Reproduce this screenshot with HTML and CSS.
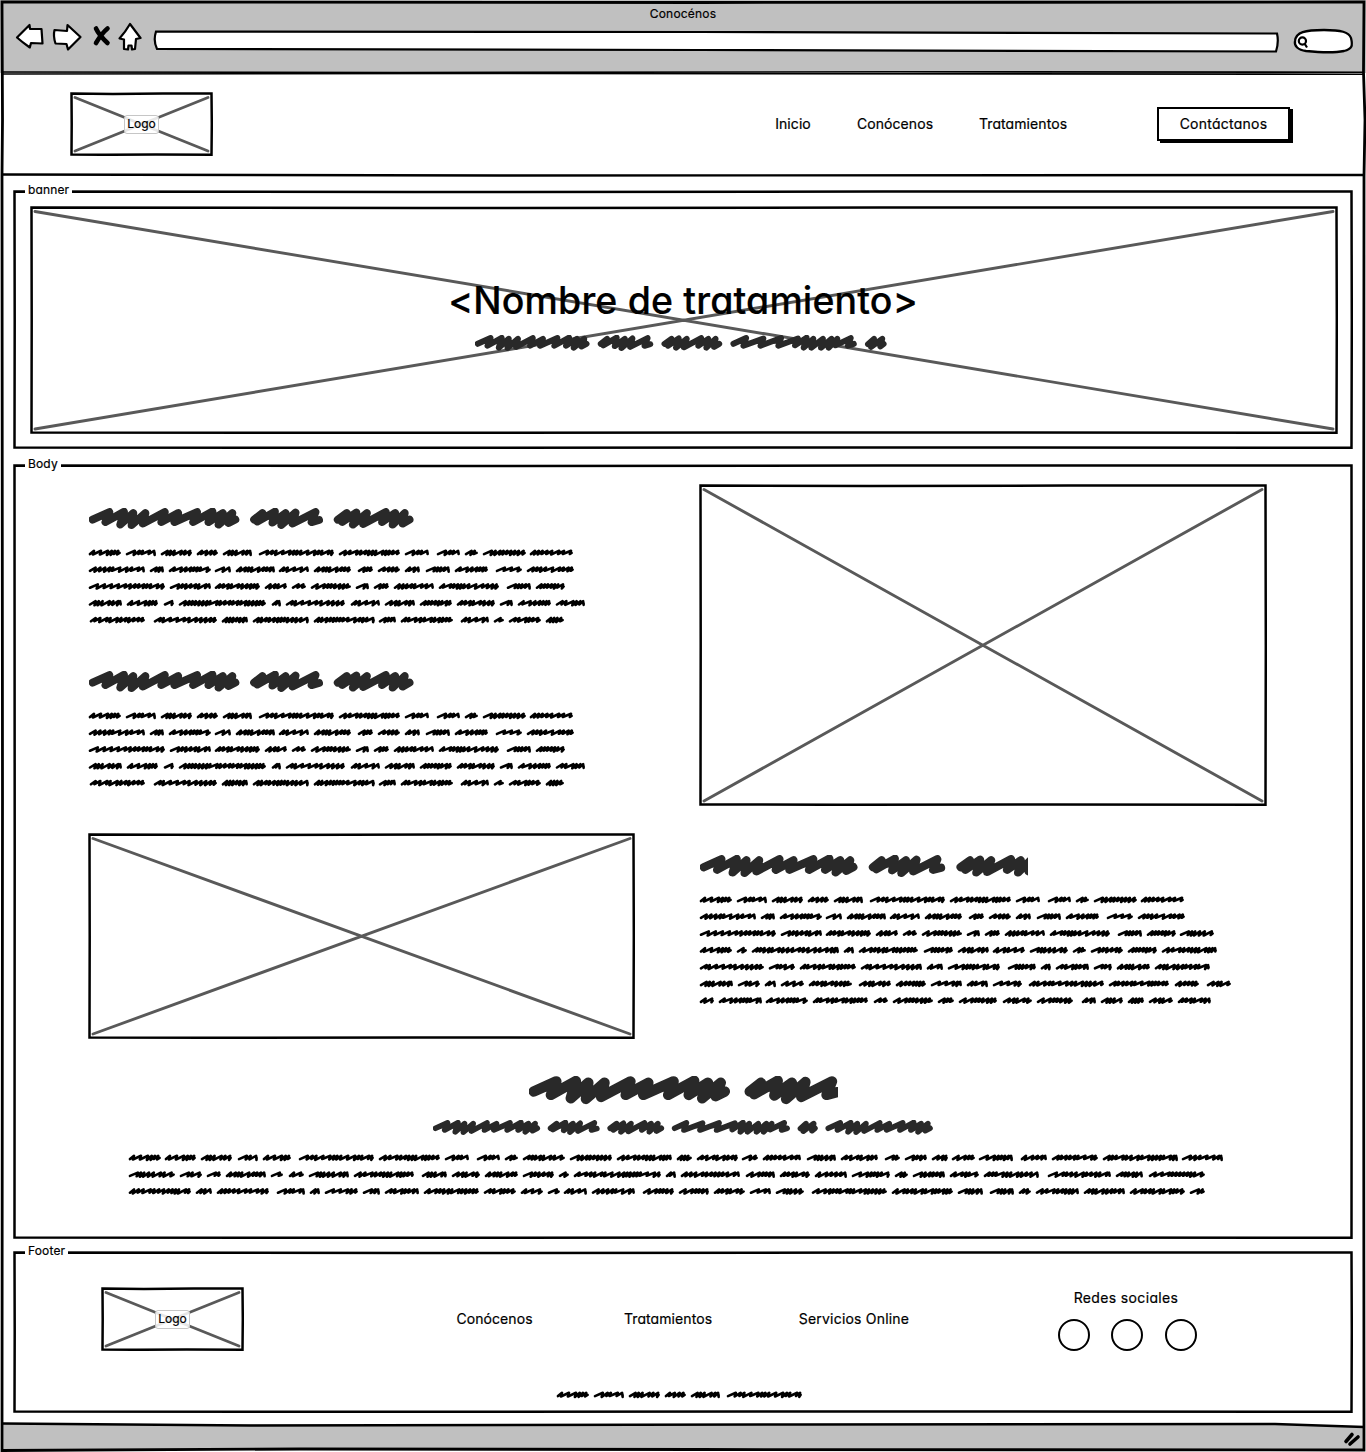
FILE: index.html
```html
<!DOCTYPE html>
<html lang="es">
<head>
<meta charset="utf-8">
<title>Conocénos</title>
<link rel="stylesheet" href="styles.css">
</head>
<body>
<div class="window">
  <header class="toolbar">
    <div class="window-title">Conocénos</div>
    <div class="controls">
      <svg class="nav-icons" width="128" height="32" viewBox="14 21 128 32">
        <g fill="#fff" stroke="#000" stroke-width="2.2" stroke-linejoin="round">
          <path d="M17 37.500 29.500 25 30 28.800 41.500 29 42.500 43.500 31 43 29.800 47.500Q22 42 17 37.500Z"/>
          <path d="M54.500 30 67 31 67.500 25 80.500 37 68 49.500 66.500 44 55.500 43.500Q53 36 54.500 30Z"/>
          <path d="M130 24 140.500 38 136 39 135 49 132 49.500 131.500 45.500 128.500 45.500 128 49.500 124 49 124 39.500 119.500 38.500Q126 31 130 24Z"/>
        </g>
        <path d="M96 28.500Q99 35 107.500 43M107.500 28.500Q102 33 96 43" fill="none" stroke="#000" stroke-width="4.600" stroke-linecap="round"/>
      </svg>
      <svg class="address" width="1126" height="24" viewBox="153 29 1126 24">
        <path d="M156 31.500 700 32 1277 33.500Q1279 42 1276 51.500L700 50 157 49Q153 41 156 31.500Z" fill="#fff" stroke="#000" stroke-width="2.200"/>
      </svg>
      <svg class="search" width="62" height="27" viewBox="1292 28 62 27">
        <path d="M1295 41C1296 32 1305 30 1324 30C1341 30 1349 32 1351 38C1353 46 1352 49 1344 51C1334 53 1316 52 1306 51C1298 50 1294 46 1295 41Z" fill="#fff" stroke="#000" stroke-width="2.300"/>
        <path d="M1306 41A3.600 3.600 0 1 1 1298.800 41A3.600 3.600 0 1 1 1306 41M1304.500 43.500 1307 47.500" fill="none" stroke="#000" stroke-width="2.200"/>
      </svg>
    </div>
  </header>

  <section class="site-header">
    <div class="sketch-image logo" data-w="143" data-h="64"><span>Logo</span></div>
    <nav>
      <a class="w-inicio">Inicio</a>
      <a class="w-con">Conócenos</a>
      <a class="w-trat">Tratamientos</a>
    </nav>
    <button class="contact">Contáctanos</button>
  </section>

  <main>
    <section class="panel banner" data-w="1340" data-h="259">
      <span class="legend">banner</span>
      <div class="sketch-image hero" data-w="1308" data-h="228">
        <div class="hero-copy">
          <h1>&lt;Nombre de tratamiento&gt;</h1>
          <div class="heading" data-words="ABCDE" data-scale=".192"></div>
        </div>
      </div>
    </section>

    <section class="panel content" data-w="1340" data-h="775">
      <span class="legend">Body</span>
      <div class="columns">
        <div class="column left">
          <div class="heading" data-words="ABC" data-scale=".252"></div>
          <div class="paragraph" data-text="short"></div>
          <div class="heading second" data-words="ABC" data-scale=".252"></div>
          <div class="paragraph" data-text="short"></div>
          <div class="sketch-image" data-w="547" data-h="206"></div>
        </div>
        <div class="column right">
          <div class="sketch-image" data-w="568" data-h="322"></div>
          <div class="heading" data-words="ABC" data-scale=".264" data-clip="328"></div>
          <div class="paragraph" data-text="long"></div>
        </div>
      </div>
      <div class="closing">
        <div class="heading" data-words="AB" data-scale=".337" data-clip="309"></div>
        <div class="heading sub" data-words="ABCDEA" data-scale=".1795"></div>
        <div class="paragraph wide" data-text="wide"></div>
      </div>
    </section>

    <section class="panel footer" data-w="1340" data-h="162">
      <span class="legend">Footer</span>
      <div class="footer-row">
        <div class="sketch-image logo" data-w="143" data-h="64"><span>Logo</span></div>
        <nav>
          <a class="w-con">Conócenos</a>
          <a class="w-trat">Tratamientos</a>
          <a class="w-serv">Servicios Online</a>
        </nav>
        <div class="social">
          <div class="social-title">Redes sociales</div>
          <div class="circles"><i></i><i></i><i></i></div>
        </div>
      </div>
      <div class="paragraph copyright" data-text="copyright"></div>
    </section>
  </main>

  <footer class="statusbar">
    <svg width="1366" height="31" viewBox="0 1421 1366 31">
      <path d="M2 1424 460 1425 800 1424.500 1275 1424 1364 1427V1450H2Z" fill="#c0c0c0"/>
      <path d="M2 1423.500 250 1425.500 800 1424.500 1275 1424 1364 1427" fill="none" stroke="#000" stroke-width="2.600"/>
      <path d="M1346 1441.500 1352 1434.500M1350 1444 1358 1437" stroke="#000" stroke-width="3.600" stroke-linecap="round"/>
    </svg>
  </footer>
  <svg class="window-frame" width="1366" height="1452" viewBox="0 0 1366 1452">
    <g fill="none" stroke="#000">
      <path d="M2 2 700 2.500 1364 2 1363.500 72 1365 120 1364 176 1363.500 800 1364 1450 700 1449.500 300 1449 2 1450.500 2.500 800 2 176 2.500 120Z" stroke-width="2.800"/>
      <path d="M2 72 400 72.500 900 71.800 1364 72.200M2 74 500 73.500 1364 74.200" stroke-width="1.600"/>
      <path d="M2 174.500 500 175.500 1364 175" stroke-width="2.400"/>
    </g>
  </svg>
</div>
<script src="sketch.js"></script>
</body>
</html>
```
FILE: styles.css
```css
* { box-sizing: border-box; }
body { margin: 0; background: #fff; color: #000; font-family: Inter, "Noto Sans", sans-serif; font-feature-settings: "cv11" 1; font-size: 14px; letter-spacing: .08px; -webkit-text-stroke: .2px #000; }
svg { display: block; }
.window { position: relative; width: 1366px; height: 1452px; overflow: hidden; display: flex; flex-direction: column; }
.window-frame { position: absolute; inset: 0; pointer-events: none; }
.toolbar { height: 73px; background: #c0c0c0; padding-top: 6px; }
.window-title { height: 15px; line-height: 15px; font-size: 12px; letter-spacing: .2px; text-align: center; }
.controls { display: flex; align-items: flex-start; padding-left: 14px; }
.address { margin: 8px 13px 0 11px; }
.search { margin-top: 7px; }

.site-header { height: 103px; padding: 19px 73px 0 70px; display: flex; align-items: flex-start; }
.sketch-image { position: relative; flex: none; }
.sketch-image > svg { position: absolute; inset: 0; }
.logo { display: grid; place-items: center; width: 143px; height: 64px; }
.logo span { position: relative; width: 35px; height: 19px; line-height: 16px; border: 1px solid #c6c6c6; border-radius: 3px; background: rgba(255,255,255,.85); text-align: center; font-size: 12px; letter-spacing: 0; }
nav { display: flex; }
nav a { white-space: nowrap; line-height: 20px; text-align: center; }
.w-inicio { width: 36px; }
.w-con { width: 77px; }
.w-trat { width: 88px; }
.w-serv { width: 112px; letter-spacing: .2px; }
.site-header nav { margin: 22px 91px 0 562px; gap: 45.5px; }
.contact { width: 133px; height: 34px; margin: 15px 0 0 -1px; border: 2px solid #000; background: #fff; box-shadow: 3px 2px 0 #000; padding: 0 0 2px; font: inherit; letter-spacing: .25px; font-feature-settings: inherit; color: #000; }

main { padding: 14px 13px 0; }
.panel { position: relative; width: 1340px; }
.panel > svg { position: absolute; inset: 0; pointer-events: none; }
.legend { position: absolute; left: 12px; top: -8px; padding: 0 3px; background: #fff; font-size: 12px; line-height: 16px; letter-spacing: .15px; z-index: 1; }
.banner { height: 260px; padding: 16px 0 0 17px; }
.hero { width: 1308px; height: 228px; }
.hero-copy { position: relative; display: flex; flex-direction: column; align-items: center; padding-top: 69px; }
h1 { margin: 0 0 8px -2px; font-size: 37.500px; line-height: 52px; font-weight: 500; letter-spacing: .15px; white-space: nowrap; }
.hero-copy .heading { margin-right: 6px; }

.content { margin-top: 14px; height: 775px; padding: 20px 0 0 75px; }
.columns { display: grid; grid-template-columns: 611px 568px; height: 592px; }
.left { padding-top: 23px; }
.heading svg { margin-left: 1px; }
.left .heading { height: 40px; padding-top: 1px; }
.left .paragraph { height: 123px; }
.left .sketch-image { width: 547px; height: 206px; }
.right .sketch-image { width: 568px; height: 323px; }
.right .heading { margin-top: 47px; height: 40px; padding-top: 1px; }
.closing { padding-left: 40px; }
.closing > .heading { margin-left: 400px; height: 44px; }
.closing > .sub { margin-left: 304px; height: 32px; }

.footer { margin-top: 12px; height: 162px; padding-top: 36px; }
.footer-row { display: flex; padding-left: 88px; height: 102px; }
.footer nav { margin: 22px 0 0 212px; }
.footer .w-trat { margin-left: 91px; }
.footer .w-serv { margin-left: 86px; }
.social { width: 140px; margin-left: 148px; }
.social-title { text-align: center; line-height: 22px; width: 136px; letter-spacing: .35px; }
.circles { display: flex; gap: 21px; margin-top: 10px; }
.circles i { width: 32px; height: 32px; border: 2px solid #000; border-radius: 50%; }
.circles i:last-child { margin-left: 1px; }
.copyright { margin-left: 543px; }
.statusbar { position: absolute; left: 0; bottom: 0; }
```
FILE: sketch.js
```js
const NS = 'http://www.w3.org/2000/svg';

function svg(width, height, markup) {
  const el = document.createElementNS(NS, 'svg');
  el.setAttribute('width', width);
  el.setAttribute('height', height);
  el.innerHTML = markup;
  return el;
}

// Slightly uneven rectangle outline
function outline(w, h) {
  return `<path d="M1.500 1.500 ${w * .3} 2 ${w * .65} 1.500 ${w - 1.500} 1.500 ${w - 1.200} ${h * .5} ${w - 1.500} ${h - 1.300} ${w * .6} ${h - 1.600} ${w * .25} ${h - 1.200} 1.500 ${h - 1.600} 1.700 ${h * .5}Z" fill="none" stroke="#000" stroke-width="2.500"/>`;
}

document.querySelectorAll('.sketch-image').forEach(box => {
  const w = +box.dataset.w, h = +box.dataset.h;
  box.prepend(svg(w, h,
    `<path d="M5 5.500 ${w - 5} ${h - 5}M5 ${h - 5} ${w - 5} 5.500" stroke="#595959" stroke-width="2.900" stroke-linecap="round"/>` + outline(w, h)));
});

document.querySelectorAll('.panel').forEach(p => p.prepend(svg(p.dataset.w, p.dataset.h, outline(+p.dataset.w, +p.dataset.h))));

// Heading words: stroke points and advance width
const glyphs = {
  A: [595, '14,46 81,16 65,56 139,15 124,66 176,20 169,68 224,20 214,62 301,16 287,56 354,20 339,56 429,16 413,56 490,14 474,56 531,20 514,66 569,20 554,60 581,46'],
  B: [286, '14,46 47,20 27,54 97,14 87,58 139,20 122,68 179,18 167,62 258,16 242,56 272,48'],
  C: [313, '14,46 50,20 32,56 88,18 74,66 130,20 115,64 205,16 190,56 242,20 232,66 280,20 272,62 299,46'],
  D: [655, '14,46 80,16 66,56 170,18 155,56 262,16 248,56 350,18 335,54 395,14 380,66 430,20 420,66 480,20 470,66 525,20 510,66 555,20 545,54 625,16 610,56 641,46'],
  E: [109, '14,48 45,20 30,62 88,20 78,60 95,46']
};

document.querySelectorAll('.heading').forEach(el => {
  const scale = +el.dataset.scale;
  let x = 0, marks = '';
  for (const key of el.dataset.words) {
    const [width, points] = glyphs[key];
    marks += `<polyline transform="translate(${x})" points="${points}"/>`;
    x += width + 46;
  }
  const width = el.dataset.clip || Math.ceil((x - 40) * scale);
  el.append(svg(width, Math.ceil(88 * scale),
    `<g transform="scale(${scale})" fill="#292929" stroke="#292929" stroke-width="31" stroke-linecap="round" stroke-linejoin="round">${marks}</g>`));
});

// Word extents per line, in pixels from the line start
const one = '0-32,37-67,72-103,108-129,134-163,170-245,250-311,316-340,348-371,376-389,394-437,441-484';
const two = '0-56,61-75,80-122,126-142,147-186,190-220,225-262,269-284,289-311,316-331,337-361,366-399,407-433,438-485';
const three = '0-76,81-122,126-171,176-198,203-217,222-262,267-280,285-300,305-345,350-410,418-442,447-476';
const texts = {
  short: [one, two, three,
    '0-33,38-69,75-85,90-177,183-192,197-256,262-291,296-326,331-363,368-406,411-424,429-462,467-496',
    '1-56,65-128,133-159,164-220,225-286,290-307,312-364,372-400,405-415,420-452,457-475'],
  long: [one, two, three + ',480-514',
    '0-32,37-47,52-139,144-154,159-218,224-253,258-289,293-325,330-368,373-386,391-423,428-457,462-517',
    '0-64,69-95,100-156,161-222,227-243,248-300,308-336,341-351,356-389,394-412,417-450,455-510',
    '0-33,38-60,65-76,81-104,109-152,159-191,196-226,231-262,267-288,293-322,329-404,409-469,475-499,507-531',
    '0-14,19-62,66-108,113-168,174-188,193-233,238-254,259-297,303-332,337-373,382-396,401-423,428-444,449-473,478-511'],
  wide: [
    '0-32,36-67,72-103,109-129,134-162,170-245,250-311,316-340,348-371,376-389,394-436,441-483,488-543,548-563,568-609,613-629,634-672,678-707,712-749,756-771,776-798,803-819,823-846,850-884,892-918,923-969,974-1049,1053-1094',
    '0-46,51-73,78-92,97-137,142-154,160-175,180-220,225-285,293-318,323-351,356-389,394-425,430-440,445-532,537-547,552-611,617-646,651-681,686-718,723-761,766-779,784-816,821-850,855-910,919-982,987-1014,1020-1076',
    '0-62,67-83,88-140,148-176,181-191,196-229,234-251,256-290,295-350,355-387,392-414,419-431,435-458,463-506,514-545,550-580,585-616,621-642,647-675,683-758,763-824,829-854,861-885,890-902,907-950,955-996,1001-1056,1061-1076'],
  copyright: ['0-32,37-67,72-103,108-129,134-163,170-245']
};

function scribble(start, end, y, seed) {
  const right = end - 1.300;
  let x = start + 1.500, d = `M${x} ${y + 1.300}`, s = seed * 7919 + 13;
  while (x < right - 3) {
    s = (s * 16807) % 2147483647;
    const step = [3.200, 3.800, 4.800, 7][s % 4];
    const lift = s % 3 * .450;
    const top = Math.min(x + step + .800, right - .500);
    d += `L${top.toFixed(1)} ${y - 2}L${Math.min(x + step - .300, right).toFixed(1)} ${y + 1.200 + lift}`;
    x += step;
  }
  return d + `L${right} ${y + .100}`;
}

document.querySelectorAll('.paragraph').forEach(el => {
  let d = '';
  const lines = texts[el.dataset.text];
  lines.forEach((line, row) => line.split(',').forEach((word, i) => {
    const [a, b] = word.split('-').map(Number);
    d += scribble(a + .500, b + .900, 5.800 + row * 16.800, b - a + i);
  }));
  el.append(svg(1110, Math.ceil(lines.length * 16.800),
    `<path d="${d}" fill="none" stroke="#000" stroke-width="2.600" stroke-linecap="round" stroke-linejoin="round"/>`));
});
```
